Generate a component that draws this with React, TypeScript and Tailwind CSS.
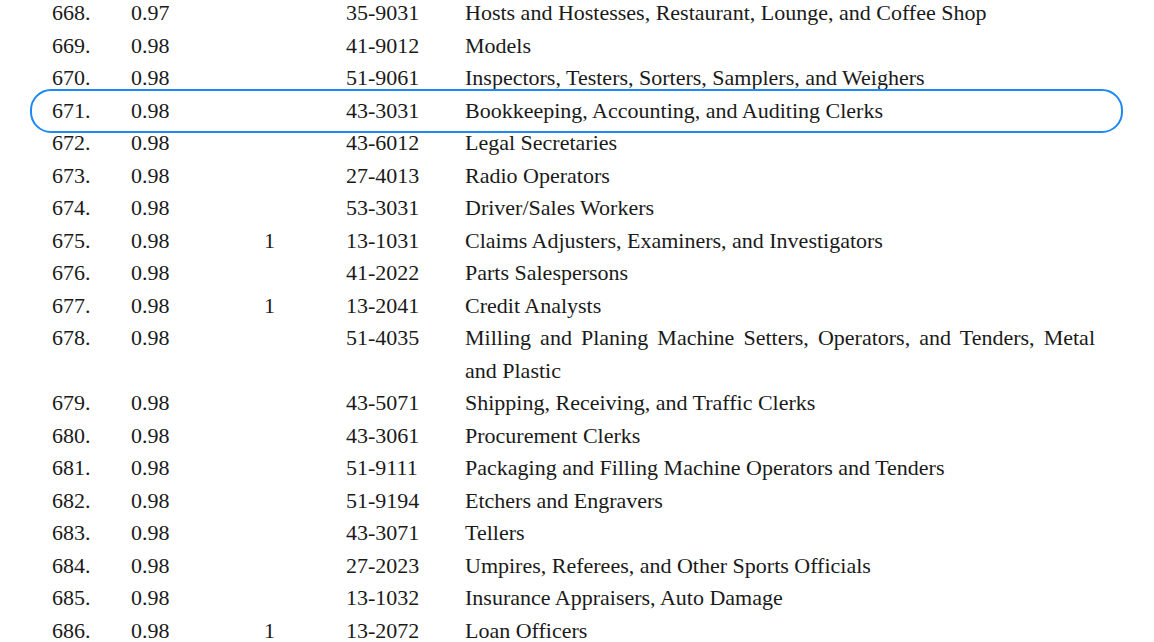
const rows: [string, string, string, string, string][] = [
  ["668.", "0.97", "", "35-9031", "Hosts and Hostesses, Restaurant, Lounge, and Coffee Shop"],
  ["669.", "0.98", "", "41-9012", "Models"],
  ["670.", "0.98", "", "51-9061", "Inspectors, Testers, Sorters, Samplers, and Weighers"],
  ["671.", "0.98", "", "43-3031", "Bookkeeping, Accounting, and Auditing Clerks"],
  ["672.", "0.98", "", "43-6012", "Legal Secretaries"],
  ["673.", "0.98", "", "27-4013", "Radio Operators"],
  ["674.", "0.98", "", "53-3031", "Driver/Sales Workers"],
  ["675.", "0.98", "1", "13-1031", "Claims Adjusters, Examiners, and Investigators"],
  ["676.", "0.98", "", "41-2022", "Parts Salespersons"],
  ["677.", "0.98", "1", "13-2041", "Credit Analysts"],
  ["678.", "0.98", "", "51-4035", "Milling and Planing Machine Setters, Operators, and Tenders, Metal and Plastic"],
  ["679.", "0.98", "", "43-5071", "Shipping, Receiving, and Traffic Clerks"],
  ["680.", "0.98", "", "43-3061", "Procurement Clerks"],
  ["681.", "0.98", "", "51-9111", "Packaging and Filling Machine Operators and Tenders"],
  ["682.", "0.98", "", "51-9194", "Etchers and Engravers"],
  ["683.", "0.98", "", "43-3071", "Tellers"],
  ["684.", "0.98", "", "27-2023", "Umpires, Referees, and Other Sports Officials"],
  ["685.", "0.98", "", "13-1032", "Insurance Appraisers, Auto Damage"],
  ["686.", "0.98", "1", "13-2072", "Loan Officers"],
];

export default function App() {
  return (
    <div className="h-[642px] w-[1154px] overflow-hidden bg-white text-[#1a1a1a] font-['Liberation_Serif','Times_New_Roman',serif] text-[22px] leading-[32.5px]">
      <div className="-mt-[3px] pl-[52px]">
        {rows.map(([n, score, flag, code, title]) => (
          <div key={n} className="relative grid grid-cols-[79px_133px_82px_119px_630px]">
            {n === "671." && (
              <span className="pointer-events-none absolute -top-[6px] -bottom-[6px] -left-[22px] w-[1093px] rounded-[21px] border-2 border-[#1e88f5]" />
            )}
            <span>{n}</span>
            <span>{score}</span>
            <span>{flag}</span>
            <span>{code}</span>
            <span className="text-justify">{title}</span>
          </div>
        ))}
      </div>
    </div>
  );
}
